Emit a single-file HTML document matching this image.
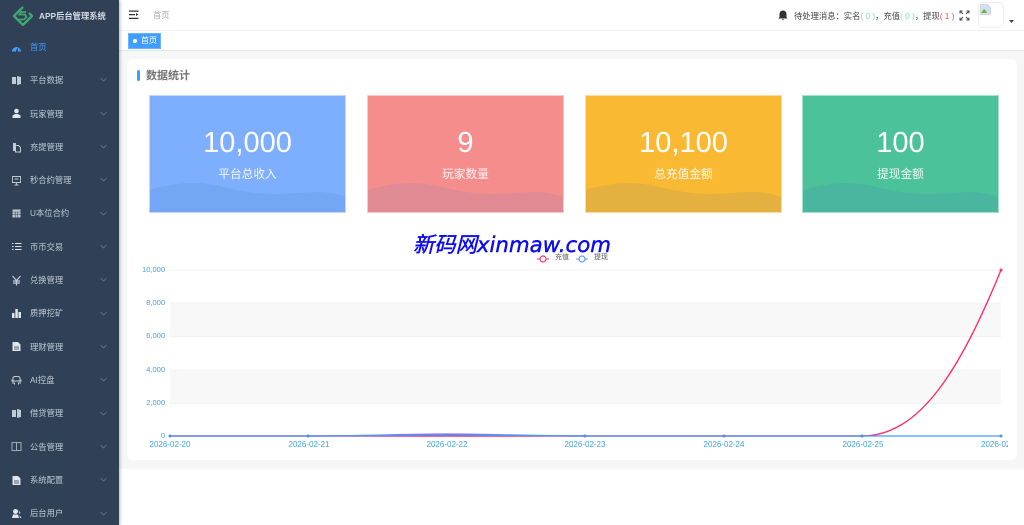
<!DOCTYPE html>
<html lang="zh"><head><meta charset="utf-8"><title>APP后台管理系统</title>
<style>
*{box-sizing:border-box;margin:0;padding:0}
html,body{width:1024px;height:525px;overflow:hidden;background:#fff;font-family:"Liberation Sans","Noto Sans CJK SC",sans-serif}
.abs{position:absolute}
#side{position:absolute;left:0;top:0;width:119px;height:525px;background:#304057;box-shadow:1px 0 3px rgba(0,21,41,.3);z-index:3}
.mi{position:absolute;left:30px;font-size:8.3px;line-height:12px;color:#bfcbd9;white-space:nowrap}
.ic{position:absolute;left:11px;width:11px;height:11px}
.ch{position:absolute;left:100px;width:7px;height:5px}
.card{position:absolute;top:95px;width:197px;height:118px;border:1px solid rgba(255,255,255,.5);overflow:hidden;color:#fff;text-align:center}
.card .n{position:absolute;left:0;right:0;top:28px;font-size:29px;line-height:38px}
.card .t{position:absolute;left:0;right:0;top:71px;font-size:11.7px;line-height:16px;opacity:.9}
.card svg{position:absolute;left:-1px;bottom:-1px}
.y{position:absolute;right:859px;font-size:7.5px;line-height:10px;color:#3ba3dc}
.x{position:absolute;top:440px;width:60px;text-align:center;font-size:8px;line-height:10px;color:#3ba3dc}
</style></head><body>
<div id="side">
<svg class="abs" style="left:13px;top:6px" width="20" height="20" viewBox="0 0 20 20" fill="none" stroke="#3fa66f" stroke-width="2.4"><path d="M10 1L1 10l9 9 9-9-3-3"/><path d="M13 6H8L6.500 8.500H12L13.500 11 11 13.500H6" stroke-width="1.800"/></svg>
<div class="abs" style="left:39px;top:10px;font-size:8.300px;line-height:12px;font-weight:bold;color:#d4dbe4;white-space:nowrap">APP后台管理系统</div>

<svg class="ic" style="top:42px" viewBox="0 0 11 11"><path fill="#409eff" d="M1 9.500A4.500 4.500 0 1 1 10 9.500H6.500L7.500 5 5 8.500V9.500Z"/></svg><div class="mi" style="top:41px;color:#409eff">首页</div>
<svg class="ic" style="top:75px" viewBox="0 0 11 11"><path fill="#bfcbd9" d="M1 2h4v7H1zM6 1l4 1v7L6 10z"/></svg><div class="mi" style="top:74px">平台数据</div>
<svg class="ic" style="top:108px" viewBox="0 0 11 11"><circle cx="5.500" cy="3" r="2.300" fill="#dfe5ec"/><path fill="#dfe5ec" d="M1.500 10V7.500L4 6h3l2.500 1.500V10z"/></svg><div class="mi" style="top:108px">玩家管理</div>
<svg class="ic" style="top:142px" viewBox="0 0 11 11"><path fill="#bfcbd9" d="M2 1h3v2H4v6H2z"/><path fill="none" stroke="#bfcbd9" d="M4.500 3.500h3L9.500 5.500V10h-5z"/></svg><div class="mi" style="top:141px">充提管理</div>
<svg class="ic" style="top:175px" viewBox="0 0 11 11" fill="none" stroke="#bfcbd9" stroke-width=".9"><path d="M1.500 1.500h8v6h-8zM5.500 7.500V10M3.500 10h4M3.500 4h4"/></svg><div class="mi" style="top:174px">秒合约管理</div>
<svg class="ic" style="top:208px" viewBox="0 0 11 11"><path fill="#bfcbd9" d="M1.500 1.500h8v8h-8z"/><path stroke="#304057" stroke-width=".6" d="M1.500 4h8M1.500 6.500h8M4.200 4v5.500M6.800 4v5.500"/></svg><div class="mi" style="top:207px">U本位合约</div>
<svg class="ic" style="top:241px" viewBox="0 0 11 11" stroke="#dfe5ec" stroke-width="1"><path d="M1 2.500h1.500M4 2.500h6.500M1 5.500h1.500M4 5.500h6.500M1 8.500h1.500M4 8.500h6.500"/></svg><div class="mi" style="top:241px">币币交易</div>
<svg class="ic" style="top:275px" viewBox="0 0 11 11" fill="none" stroke="#bfcbd9" stroke-width="1.200"><path d="M1.500 1l4 4.500 4-4.500M5.500 5.500V10.500M2 6h7M2 8h7"/></svg><div class="mi" style="top:274px">兑换管理</div>
<svg class="ic" style="top:308px" viewBox="0 0 11 11" fill="#dfe5ec"><path d="M1 5h2.500v5H1zM4.300 1h2.500v9H4.300zM7.500 4H10v6H7.500z"/></svg><div class="mi" style="top:307px">质押挖矿</div>
<svg class="ic" style="top:341px" viewBox="0 0 11 11"><path fill="#dfe5ec" d="M1.500 1h5.500l2.500 2.500V10h-8z"/><path stroke="#304057" stroke-width=".7" d="M3 6h5M3 8h5"/></svg><div class="mi" style="top:341px">理财管理</div>
<svg class="ic" style="top:375px" viewBox="0 0 11 11" fill="none" stroke="#bfcbd9"><path d="M2 9V3.500Q2 1.500 4 1.500h3q2 0 2 2V9M2 6h7M3.500 7.500v2M7.500 7.500v2M1 4.500v2M10 4.500v2"/></svg><div class="mi" style="top:374px">AI控盘</div>
<svg class="ic" style="top:408px" viewBox="0 0 11 11"><path fill="#bfcbd9" d="M1 2h4v7H1zM6 1l4 1v7L6 10z"/></svg><div class="mi" style="top:407px">借贷管理</div>
<svg class="ic" style="top:441px" viewBox="0 0 11 11" fill="none" stroke="#bfcbd9" stroke-width=".8"><path d="M1 1.500h9v8H1zM5.500 1.500v8"/></svg><div class="mi" style="top:441px">公告管理</div>
<svg class="ic" style="top:475px" viewBox="0 0 11 11"><path fill="#dfe5ec" d="M1.500 1h5.500l2.500 2.500V10h-8z"/><path stroke="#304057" stroke-width=".7" d="M3 6h5M3 8h5"/></svg><div class="mi" style="top:474px">系统配置</div>
<svg class="ic" style="top:508px" viewBox="0 0 11 11" fill="#dfe5ec"><circle cx="4.500" cy="3.500" r="2.500"/><path d="M1 10l1-3.500h5L8 10zM7.500 2l2 3-1 1zM8.500 7l2 3H9z"/></svg><div class="mi" style="top:507px">后台用户</div>

<svg class="ch" style="top:77px" viewBox="0 0 7 5" fill="none" stroke="#6f8094" stroke-width=".7"><path d="M.5 1l3 3 3-3"/></svg>
<svg class="ch" style="top:111px" viewBox="0 0 7 5" fill="none" stroke="#6f8094" stroke-width=".7"><path d="M.5 1l3 3 3-3"/></svg>
<svg class="ch" style="top:144px" viewBox="0 0 7 5" fill="none" stroke="#6f8094" stroke-width=".7"><path d="M.5 1l3 3 3-3"/></svg>
<svg class="ch" style="top:177px" viewBox="0 0 7 5" fill="none" stroke="#6f8094" stroke-width=".7"><path d="M.5 1l3 3 3-3"/></svg>
<svg class="ch" style="top:211px" viewBox="0 0 7 5" fill="none" stroke="#6f8094" stroke-width=".7"><path d="M.5 1l3 3 3-3"/></svg>
<svg class="ch" style="top:244px" viewBox="0 0 7 5" fill="none" stroke="#6f8094" stroke-width=".7"><path d="M.5 1l3 3 3-3"/></svg>
<svg class="ch" style="top:277px" viewBox="0 0 7 5" fill="none" stroke="#6f8094" stroke-width=".7"><path d="M.5 1l3 3 3-3"/></svg>
<svg class="ch" style="top:311px" viewBox="0 0 7 5" fill="none" stroke="#6f8094" stroke-width=".7"><path d="M.5 1l3 3 3-3"/></svg>
<svg class="ch" style="top:344px" viewBox="0 0 7 5" fill="none" stroke="#6f8094" stroke-width=".7"><path d="M.5 1l3 3 3-3"/></svg>
<svg class="ch" style="top:377px" viewBox="0 0 7 5" fill="none" stroke="#6f8094" stroke-width=".7"><path d="M.5 1l3 3 3-3"/></svg>
<svg class="ch" style="top:411px" viewBox="0 0 7 5" fill="none" stroke="#6f8094" stroke-width=".7"><path d="M.5 1l3 3 3-3"/></svg>
<svg class="ch" style="top:444px" viewBox="0 0 7 5" fill="none" stroke="#6f8094" stroke-width=".7"><path d="M.5 1l3 3 3-3"/></svg>
<svg class="ch" style="top:477px" viewBox="0 0 7 5" fill="none" stroke="#6f8094" stroke-width=".7"><path d="M.5 1l3 3 3-3"/></svg>
<svg class="ch" style="top:511px" viewBox="0 0 7 5" fill="none" stroke="#6f8094" stroke-width=".7"><path d="M.5 1l3 3 3-3"/></svg>
</div>

<!-- header -->
<div class="abs" style="left:119px;top:0;width:905px;height:31px;background:#fff;border-bottom:1px solid #eef0f3"></div>
<svg class="abs" style="left:129px;top:10px" width="10" height="10" viewBox="0 0 10 10" fill="#333"><path d="M0 .5h9.500v1.200H0zM0 4h6v1.200H0zM0 7.800h9.500V9H0zM7 3l2.500 1.500L7 6z"/></svg>
<div class="abs" style="left:153px;top:9px;font-size:8.300px;line-height:12px;color:#a5a9b0">首页</div>
<svg class="abs" style="left:778px;top:10px" width="10" height="11" viewBox="0 0 10 11" fill="#333"><path d="M5 .5q3.500 0 3.500 4v2.500L9.500 8.500H.5L1.500 7V4.500Q1.500.5 5 .5zM3.800 9.300h2.400L5 10.500z"/></svg>
<div class="abs" style="left:794px;top:10px;font-size:8.300px;line-height:12px;color:#444;white-space:nowrap">待处理消息：实名<span style="color:#7fd8bb">( 0 )</span>，充值<span style="color:#7fd8bb">( 0 )</span>，提现<span style="color:#f04d4d">( 1 )</span></div>
<svg class="abs" style="left:959px;top:10px" width="11" height="11" viewBox="0 0 11 11" fill="none" stroke="#444" stroke-width=".9"><path d="M1 3.500V1h2.500M1 1l3 3M10 3.500V1H7.500M10 1L7 4M1 7.500V10h2.500M1 10l3-3M10 7.500V10H7.500M10 10L7 7"/></svg>
<div class="abs" style="left:979px;top:3px;width:24px;height:24px;border-radius:3px;box-shadow:0 0 1.500px #bbb;background:#fff"></div>
<svg class="abs" style="left:980px;top:4px" width="11" height="11" viewBox="0 0 11 11"><path fill="#cfe0f2" stroke="#b9bec4" stroke-width=".5" d="M.5.500h7l3 3v7H.5z"/><path fill="#6fb04f" d="M1 9l3-4 2 2 1 2z"/></svg>
<svg class="abs" style="left:1009px;top:20px" width="5" height="3"><path fill="#444" d="M0 0h5L2.500 3z"/></svg>

<!-- tags -->
<div class="abs" style="left:119px;top:31px;width:905px;height:20px;background:#fff;border-bottom:1px solid #e4e6ea"></div>
<div class="abs" style="left:128px;top:33px;width:33px;height:16px;background:#409eff;color:#fff;font-size:8px;line-height:14px;padding-left:12px;border:1px solid #6cb2ff">首页</div>
<div class="abs" style="left:133px;top:39px;width:4px;height:4px;border-radius:50%;background:#fff"></div>

<!-- content -->
<div class="abs" style="left:119px;top:51px;width:905px;height:418px;background:#f6f6f7"></div>
<div class="abs" style="left:127px;top:59px;width:890px;height:401px;background:#fff;border-radius:6px"></div>
<div class="abs" style="left:137px;top:70px;width:3px;height:11px;background:#409eff;border-radius:1.500px"></div>
<div class="abs" style="left:146px;top:69px;font-size:11px;line-height:14px;font-weight:bold;color:#737373">数据统计</div>

<div class="card" style="left:149px;background:#7eaefe"><div class="n">10,000</div><div class="t">平台总收入</div>
<svg width="197" height="30" viewBox="0 0 197 30"><path fill="#74a6f4" d="M0 7C15 3 30 0 45 0C70 0 90 11 125 11C145 11 155 9 170 9C180 9 190 12 197 14V30H0Z"/></svg></div>
<div class="card" style="left:367px;background:#f68d8d"><div class="n">9</div><div class="t">玩家数量</div>
<svg width="197" height="30" viewBox="0 0 197 30"><path fill="#e08a94" d="M0 7C15 3 30 0 45 0C70 0 90 11 125 11C145 11 155 9 170 9C180 9 190 12 197 14V30H0Z"/></svg></div>
<div class="card" style="left:585px;background:#f9b932"><div class="n">10,100</div><div class="t">总充值金额</div>
<svg width="197" height="30" viewBox="0 0 197 30"><path fill="#e4b040" d="M0 7C15 3 30 0 45 0C70 0 90 11 125 11C145 11 155 9 170 9C180 9 190 12 197 14V30H0Z"/></svg></div>
<div class="card" style="left:802px;background:#4cc29a"><div class="n">100</div><div class="t">提现金额</div>
<svg width="197" height="30" viewBox="0 0 197 30"><path fill="#4ab6a0" d="M0 7C15 3 30 0 45 0C70 0 90 11 125 11C145 11 155 9 170 9C180 9 190 12 197 14V30H0Z"/></svg></div>

<!-- chart -->
<svg class="abs" style="left:0;top:0" width="1024" height="525" viewBox="0 0 1024 525">
<rect x="170" y="303" width="831" height="33.500" fill="#f8f8f8"/>
<rect x="170" y="370" width="831" height="33.500" fill="#f8f8f8"/>
<path stroke="#f0f0f0" stroke-width=".8" d="M170 270H1001M170 303H1001M170 336.500H1001M170 370H1001M170 403.500H1001"/>
<path fill="none" stroke="#ff2e6c" stroke-width="1.400" d="M170 436H862C920 436 960 370 1001 270"/>
<path fill="none" stroke="#9a6fe0" stroke-width="1.300" d="M308 436C370 436 400 434 447 434S530 436 585 436"/>
<path fill="none" stroke="#409cff" stroke-width="1.300" d="M170 436H308C370 436 400 435 447 435S530 436 585 436H1001"/>
<g fill="#4d8df5"><circle cx="170" cy="436" r="1.500"/><circle cx="308" cy="436" r="1.500"/><circle cx="447" cy="435" r="1.500"/><circle cx="585" cy="436" r="1.500"/><circle cx="724" cy="436" r="1.500"/><circle cx="862" cy="436" r="1.500"/><circle cx="1001" cy="436" r="1.500"/></g>
<circle cx="1001" cy="270" r="1.500" fill="#ff2e6c"/>
<path stroke="#ff2e6c" stroke-width="1" d="M537 259h12"/><circle cx="543" cy="259" r="3" fill="#fff" stroke="#ff2e6c" stroke-width="1.200"/>
<path stroke="#5c9df5" stroke-width="1" d="M576 259h12"/><circle cx="582" cy="259" r="3" fill="#fff" stroke="#5c9df5" stroke-width="1.200"/>
</svg>
<div class="abs" style="left:555px;top:253px;font-size:7px;line-height:10px;color:#555">充值</div>
<div class="abs" style="left:594px;top:253px;font-size:7px;line-height:10px;color:#555">提现</div>
<div class="y" style="top:264.500px">10,000</div><div class="y" style="top:298px">8,000</div><div class="y" style="top:331px">6,000</div><div class="y" style="top:364.500px">4,000</div><div class="y" style="top:398px">2,000</div><div class="y" style="top:431px">0</div>
<div class="x" style="left:140px">2026-02-20</div><div class="x" style="left:279px">2026-02-21</div><div class="x" style="left:417px">2026-02-22</div><div class="x" style="left:555px">2026-02-23</div><div class="x" style="left:694px">2026-02-24</div><div class="x" style="left:833px">2026-02-25</div>
<div class="abs" style="left:981px;top:440px;width:27px;overflow:hidden;font-size:8px;line-height:10px;color:#3ba3dc;white-space:nowrap">2026-02-26</div>

<div class="abs" style="left:413px;top:232px;font-size:21.300px;line-height:27px;font-style:italic;color:#0b0bf0;white-space:nowrap;-webkit-text-stroke:.45px #0b0bf0;font-family:'DejaVu Sans','Noto Sans CJK SC',sans-serif">新码网xinmaw.com</div>
</body></html>
